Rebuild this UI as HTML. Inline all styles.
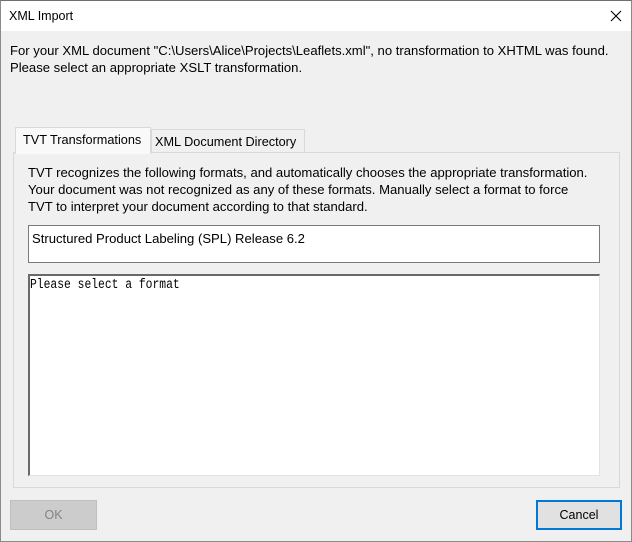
<!DOCTYPE html>
<html><head><style>
*{margin:0;padding:0;box-sizing:border-box}
body{width:632px;height:542px;background:#f0f0f0;font-family:"Liberation Sans",sans-serif;font-size:13.1px;color:#000;position:relative;overflow:hidden}
.frame{position:absolute;left:0;top:0;width:632px;height:542px;border:1px solid #8a8a8a;border-top-color:#6e6e6e}
.title{position:absolute;left:1px;top:1px;width:630px;height:30px;background:#fff}
.title span{position:absolute;left:8px;top:8px;font-size:12.5px}
.x{position:absolute;left:606px;top:6px}
.a{position:absolute;white-space:nowrap}
.tab1{position:absolute;left:15px;top:127px;width:136px;height:27px;background:#f9f9f9;border:1px solid #d9d9d9;border-bottom:none;z-index:2;font-size:12.7px}
.tab2{position:absolute;left:151px;top:129px;width:154px;height:23px;background:#f0f0f0;border:1px solid #d9d9d9;border-bottom:none;font-size:12.7px}
.panel{position:absolute;left:13px;top:152px;width:607px;height:336px;border:1px solid #d9d9d9;background:#f0f0f0}
.combo{position:absolute;left:28px;top:225px;width:572px;height:38px;background:#fff;border:1px solid #7a7a7a}
.list{position:absolute;left:28px;top:274px;width:572px;height:202px;background:#fff;border-top:2px solid #696969;border-left:2px solid #696969;border-right:1px solid #e3e3e3;border-bottom:1px solid #e3e3e3}
.btn{position:absolute;top:500px;height:30px;text-align:center;line-height:28px;font-size:12.5px}
</style></head><body>
<div class="frame"></div>
<div class="title"><span>XML Import</span>
<svg class="x" width="18" height="18" viewBox="0 0 18 18"><path d="M4 4L14 14M14 4L4 14" stroke="#000" stroke-width="1.1"/></svg></div>
<div class="a" style="left:10px;top:43px">For your XML document "C:\Users\Alice\Projects\Leaflets.xml", no transformation to XHTML was found.</div>
<div class="a" style="left:10px;top:60px">Please select an appropriate XSLT transformation.</div>
<div class="panel"></div>
<div class="tab1"><span class="a" style="left:7px;top:5px">TVT Transformations</span></div>
<div class="tab2"><span class="a" style="left:3px;top:5px">XML Document Directory</span></div>
<div class="a" style="left:28px;top:165px">TVT recognizes the following formats, and automatically chooses the appropriate transformation.</div>
<div class="a" style="left:28px;top:182px">Your document was not recognized as any of these formats. Manually select a format to force</div>
<div class="a" style="left:28px;top:199px">TVT to interpret your document according to that standard.</div>
<div class="combo"><span class="a" style="left:3px;top:5px">Structured Product Labeling (SPL) Release 6.2</span></div>
<div class="list"><span class="a" style="left:0px;top:2px;font-family:'Liberation Mono',monospace;font-size:13.5px;transform:scaleX(0.84);transform-origin:0 0">Please select a format</span></div>
<div class="btn" style="left:10px;width:87px;background:#cccccc;border:1px solid #bfbfbf;color:#838383">OK</div>
<div class="btn" style="left:536px;width:86px;background:#e1e1e1;border:2px solid #0078d7;line-height:26px">Cancel</div>
</body></html>
